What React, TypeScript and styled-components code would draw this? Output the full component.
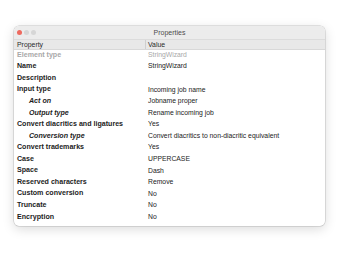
import React from "react";
import styled, { createGlobalStyle } from "styled-components";

const Global = createGlobalStyle`
  html, body { margin: 0; padding: 0; background: #ffffff; }
  body { font-family: "Liberation Sans", Arial, sans-serif; }
`;

const Page = styled.div`
  width: 340px;
  height: 260px;
  padding: 26px 0 0 14px;
  box-sizing: border-box;
`;

const Window = styled.div`
  width: 311px;
  height: 200px;
  border-radius: 5px;
  background: #ffffff;
  box-shadow: 0 0 0 0.5px rgba(0, 0, 0, 0.2), 0 3px 12px rgba(0, 0, 0, 0.15);
  overflow: hidden;
  display: flex;
  flex-direction: column;
`;

const TitleBar = styled.div`
  height: 12.5px;
  background: #ececec;
  display: flex;
  align-items: center;
  position: relative;
  padding-left: 2.5px;
  gap: 2px;
  border-bottom: 0.5px solid #dcdcdc;
`;

const Light = styled.span<{ $color: string }>`
  width: 5px;
  height: 5px;
  border-radius: 50%;
  background: ${(p) => p.$color};
  display: inline-block;
`;

const Title = styled.div`
  position: absolute;
  left: 0;
  right: 0;
  top: 0;
  bottom: 0;
  display: flex;
  align-items: center;
  justify-content: center;
  font-size: 7px;
  color: #4c4c4c;
`;

const Header = styled.div`
  display: grid;
  grid-template-columns: 131px 1fr;
  height: 9px;
  background: #e8e8e8;
  border-bottom: 0.5px solid #d8d8d8;
  font-size: 6.9px;
  color: #2a2a2a;
  align-items: center;
`;

const HeadCell = styled.div<{ $divider?: boolean }>`
  padding-left: 3px;
  height: 100%;
  display: flex;
  align-items: center;
  ${(p) => (p.$divider ? "border-left: 1px solid #cfcfcf; padding-left: 2px;" : "")}
`;

const Body = styled.div`
  display: flex;
  flex-direction: column;
`;

const Row = styled.div`
  display: grid;
  grid-template-columns: 134px 1fr;
  height: 11.57px;
  align-items: center;
  line-height: 1;
`;

const Label = styled.div<{ $indent?: boolean; $muted?: boolean }>`
  padding-left: ${(p) => (p.$indent ? "15px" : "3px")};
  font-size: 7.1px;
  font-weight: bold;
  font-style: ${(p) => (p.$indent ? "italic" : "normal")};
  color: ${(p) => (p.$muted ? "#a8a8a8" : "#1c1c1c")};
  white-space: nowrap;
`;

const Value = styled.div<{ $muted?: boolean }>`
  font-size: 6.8px;
  color: ${(p) => (p.$muted ? "#a8a8a8" : "#222222")};
  white-space: nowrap;
`;

type Item = { label: string; value: string; indent?: boolean; muted?: boolean };

const items: Item[] = [
  { label: "Element type", value: "StringWizard", muted: true },
  { label: "Name", value: "StringWizard" },
  { label: "Description", value: "" },
  { label: "Input type", value: "Incoming job name" },
  { label: "Act on", value: "Jobname proper", indent: true },
  { label: "Output type", value: "Rename incoming job", indent: true },
  { label: "Convert diacritics and ligatures", value: "Yes" },
  { label: "Conversion type", value: "Convert diacritics to non-diacritic equivalent", indent: true },
  { label: "Convert trademarks", value: "Yes" },
  { label: "Case", value: "UPPERCASE" },
  { label: "Space", value: "Dash" },
  { label: "Reserved characters", value: "Remove" },
  { label: "Custom conversion", value: "No" },
  { label: "Truncate", value: "No" },
  { label: "Encryption", value: "No" },
];

export default function App() {
  return (
    <Page>
      <Global />
      <Window>
        <TitleBar>
          <Light $color="#ee6a5f" />
          <Light $color="#d6d6d6" />
          <Light $color="#d6d6d6" />
          <Title>Properties</Title>
        </TitleBar>
        <Header>
          <HeadCell>Property</HeadCell>
          <HeadCell $divider>Value</HeadCell>
        </Header>
        <Body>
          {items.map((it) => (
            <Row key={it.label}>
              <Label $indent={it.indent} $muted={it.muted}>
                {it.label}
              </Label>
              <Value $muted={it.muted}>{it.value}</Value>
            </Row>
          ))}
        </Body>
      </Window>
    </Page>
  );
}
